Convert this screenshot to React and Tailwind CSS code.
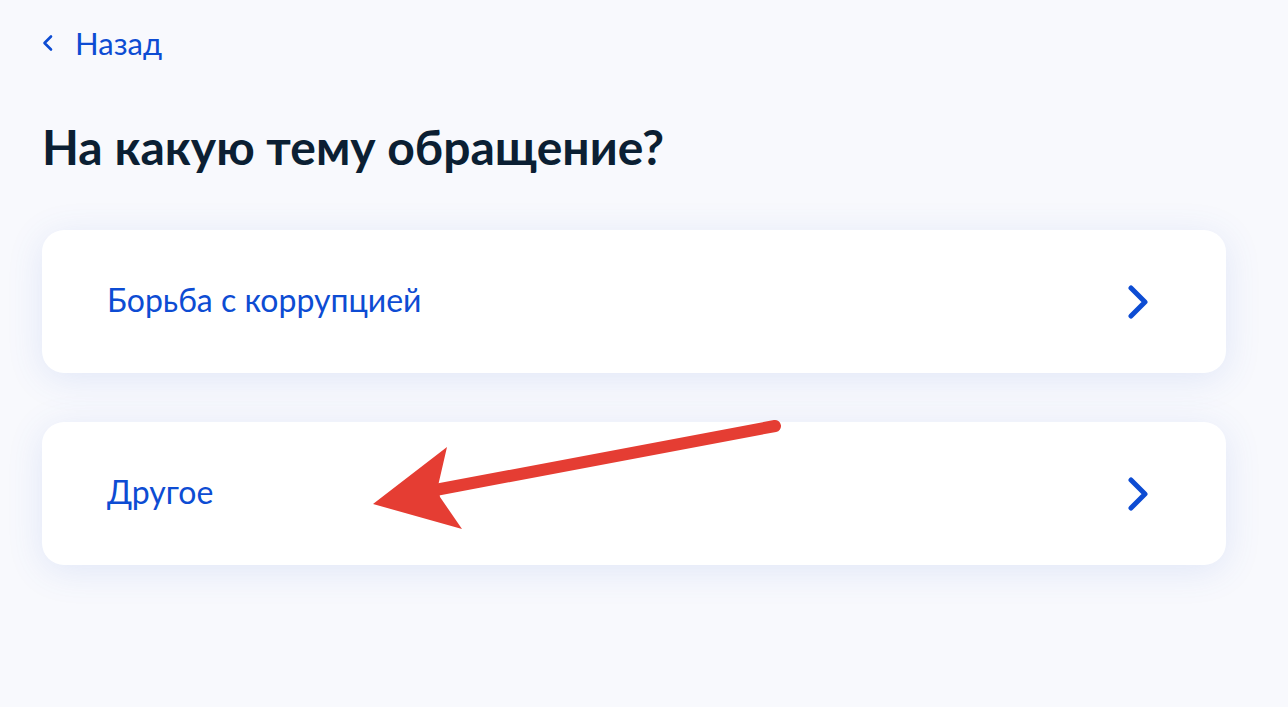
const topics = [
  { id: "corruption", title: "Борьба с коррупцией" },
  { id: "other", title: "Другое" },
];

function ChevronRight() {
  return (
    <svg width="20" height="34" viewBox="0 0 20 34" fill="none">
      <path
        d="M3 3L17 17L3 31"
        stroke="#0d4cd3"
        strokeWidth="5"
        strokeLinecap="round"
        strokeLinejoin="round"
      />
    </svg>
  );
}

function ChevronBack() {
  return (
    <svg width="12" height="18" viewBox="0 0 12 18" fill="none">
      <path
        d="M9 2.5L2.5 9L9 15.5"
        stroke="#0d4cd3"
        strokeWidth="2.6"
        strokeLinecap="round"
        strokeLinejoin="round"
      />
    </svg>
  );
}

function TopicCard({ title }) {
  return (
    <button className="flex h-[143px] w-full items-center justify-between rounded-[22px] bg-white pl-[65px] pr-[78px] text-left shadow-[0_6px_36px_rgba(70,110,210,0.13)]">
      <span className="mb-[4px] text-[32px] leading-none text-[#0d4cd3]">{title}</span>
      <ChevronRight />
    </button>
  );
}

// red pointer drawn on top of the list
function Pointer() {
  return (
    <svg
      className="pointer-events-none absolute left-0 top-0"
      width="1288"
      height="707"
      viewBox="0 0 1288 707"
    >
      <line
        x1="775"
        y1="426"
        x2="430"
        y2="491"
        stroke="#e53d33"
        strokeWidth="12"
        strokeLinecap="round"
      />
      <polygon points="373,504 447,447 438,486 440,497 462,529" fill="#e53d33" />
    </svg>
  );
}

export default function App() {
  return (
    <div
      className="relative min-h-[707px] bg-[#f8f9fd] px-[42px] pt-[27px]"
      style={{ fontFamily: "Lato, 'Noto Sans', sans-serif" }}
    >
      <a href="#" className="flex h-[32px] items-center gap-[21px] text-[#0d4cd3]">
        <ChevronBack />
        <span className="text-[31px] leading-[32px]">Назад</span>
      </a>

      <h1 className="mt-[60px] text-[48px] font-bold leading-[56px] text-[#0b1f33]">
        На какую тему обращение?
      </h1>

      <div className="mt-[55px] flex w-[1184px] flex-col gap-[49px]">
        {topics.map((t) => (
          <TopicCard key={t.id} title={t.title} />
        ))}
      </div>

      <Pointer />
    </div>
  );
}
